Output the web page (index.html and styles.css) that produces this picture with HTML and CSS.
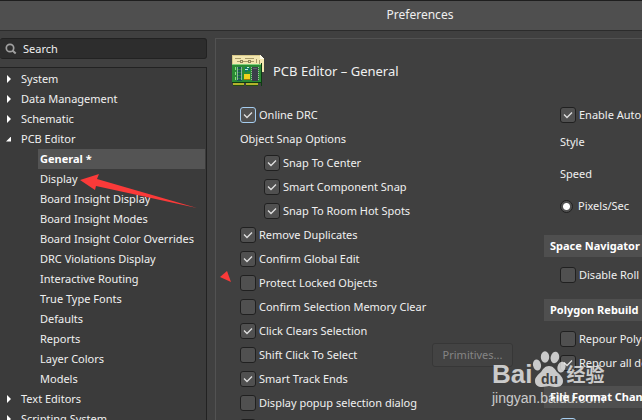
FILE: index.html
```html
<!DOCTYPE html>
<html lang="en">
<head>
<meta charset="utf-8">
<title>Preferences</title>
<link rel="stylesheet" href="styles.css">
</head>
<body>
<header class="titlebar">Preferences</header>
<div class="content">
  <aside class="sidebar">
    <label class="search">
      <svg class="search-icon" width="12" height="12" viewBox="0 0 12 12"><circle cx="5" cy="5" r="3.7" fill="none" stroke="#a0a0a0" stroke-width="1.7"/><path d="M7.5 7.5l3.2 3" stroke="#a0a0a0" stroke-width="2"/></svg>
      <input type="text" placeholder="Search" aria-label="Search">
    </label>
    <ul class="tree">
      <li class="node">System</li>
      <li class="node">Data Management</li>
      <li class="node">Schematic</li>
      <li class="node open">PCB Editor</li>
      <li class="leaf selected">General *</li>
      <li class="leaf">Display</li>
      <li class="leaf">Board Insight Display</li>
      <li class="leaf">Board Insight Modes</li>
      <li class="leaf">Board Insight Color Overrides</li>
      <li class="leaf">DRC Violations Display</li>
      <li class="leaf">Interactive Routing</li>
      <li class="leaf">True Type Fonts</li>
      <li class="leaf">Defaults</li>
      <li class="leaf">Reports</li>
      <li class="leaf">Layer Colors</li>
      <li class="leaf">Models</li>
      <li class="node">Text Editors</li>
      <li class="node">Scripting System</li>
    </ul>
  </aside>
  <main class="panel">
    <div class="panel-head">
      <svg width="32" height="32" viewBox="0 0 32 32" shape-rendering="crispEdges">
        <path d="M0 0h28l4 4v13H0z" fill="#f3e7b0"/>
        <path d="M0 0h28v1H0zM0 0h1v10H0z" fill="#d9c98a"/>
        <path d="M28 0v4h4z" fill="#fffbe6"/>
        <path d="M5 6h3M10 6h6M18 6h4M24 4v4M27 5v4M3 3h6M13 3h9" stroke="#a89a68" fill="none"/>
        <path d="M8 5h2v2H8zM16 5h2v2h-2z" fill="none" stroke="#8f8358"/>
        <path d="M0 9h30v19H0z" fill="#2b8a35"/>
        <path d="M0 9h30v1H0z" fill="#7fd07a"/>
        <path d="M29 8h1v23h-1zM0 27h29v1H0z" fill="#0d3c12"/>
        <path d="M1 28h11v2H1zM14 28h12v2H14z" fill="#b5b32c"/>
        <path d="M1 30h11v1H1zM14 30h12v1H14z" fill="#234d12"/>
        <path d="M3 12h1v3H3zM3 17h1v3H3zM3 22h1v3H3z" fill="#8ae37e"/>
        <path d="M5 12h5v2H5zM5 15h5v2H5zM5 18h5v2H5zM5 21h5v2H5zM5 24h5v2H5z" fill="#1b5b51"/>
        <path d="M5 12h1v13H5zM9 12h1v13H9z" fill="#b9cfca" opacity=".7"/>
        <path d="M13 12h2v2h-2zM16 13h2v3h-2zM13 15h2v2h-2z" fill="#0f766c"/>
        <path d="M15 12h2v1h-2zM13 14h3v1h-3z" fill="#bfe8e0"/>
        <path d="M12 19h6v5h-6z" fill="#f0d21c"/><path d="M12 24h6v1h-6z" fill="#9b7610"/>
        <path d="M20 12h6v14h-6z" fill="#3c3f4a"/><path d="M21 13h4v1h-4z" fill="#60646f"/>
        <path d="M19.500 12v14M26.500 12v14" stroke="#9fb8a0" stroke-dasharray="1 1"/>
      </svg>
      <h1>PCB Editor – General</h1>
    </div>
    <div class="columns">
      <div class="column">
        <label class="option"><input type="checkbox" class="focused" checked>Online DRC</label>
        <div class="option">Object Snap Options</div>
        <label class="option indent"><input type="checkbox" checked>Snap To Center</label>
        <label class="option indent"><input type="checkbox" checked>Smart Component Snap</label>
        <label class="option indent"><input type="checkbox" checked>Snap To Room Hot Spots</label>
        <label class="option"><input type="checkbox" checked>Remove Duplicates</label>
        <label class="option"><input type="checkbox" checked>Confirm Global Edit</label>
        <label class="option"><input type="checkbox">Protect Locked Objects</label>
        <label class="option"><input type="checkbox">Confirm Selection Memory Clear</label>
        <label class="option"><input type="checkbox" checked>Click Clears Selection</label>
        <div class="option split">
          <label class="option"><input type="checkbox">Shift Click To Select</label>
          <button type="button" class="primitives" disabled>Primitives...</button>
        </div>
        <label class="option"><input type="checkbox" checked>Smart Track Ends</label>
        <label class="option"><input type="checkbox">Display popup selection dialog</label>
        <label class="option"><input type="checkbox" aria-label="More"></label>
      </div>
      <div class="column side">
        <section class="group">
          <label class="option"><input type="checkbox" checked>Enable Auto Pan</label>
          <div class="field">Style</div>
          <div class="field">Speed</div>
          <label class="field"><input type="radio" name="speed" checked>Pixels/Sec</label>
        </section>
        <h2>Space Navigator Options</h2>
        <section class="group boxed">
          <label class="option"><input type="checkbox">Disable Roll</label>
        </section>
        <h2>Polygon Rebuild</h2>
        <section class="group boxed">
          <label class="option"><input type="checkbox">Repour Polygons After Modification</label>
          <label class="option"><input type="checkbox" checked>Repour all dependent polygons</label>
        </section>
        <h2>File Format Change Report</h2>
        <section class="group boxed">
          <label class="option"><input type="checkbox" class="focused" aria-label="Disable report"></label>
        </section>
      </div>
    </div>
  </main>
</div>

<svg class="arrow" width="118" height="36" viewBox="0 0 118 36"><path d="M0 7L19 1L17 6L117 35L16 13L15 17z" fill="#fb3a39"/></svg>
<svg class="pointer" width="12" height="12" viewBox="0 0 12 12"><path d="M7 0L0 6L11 11z" fill="#fb3a39"/></svg>

<div class="watermark">
  <div class="brand">
    <span class="bai">Bai</span>
    <span class="paw">
      <svg width="34" height="37" viewBox="0 0 34 37" fill="#fff">
        <ellipse cx="5" cy="14" rx="4" ry="5.500" transform="rotate(-12 5 14)"/>
        <ellipse cx="13" cy="6" rx="4.200" ry="5.800"/>
        <ellipse cx="23" cy="6.500" rx="4.200" ry="5.800" transform="rotate(12 23 6)"/>
        <ellipse cx="29.500" cy="16" rx="4" ry="5.500" transform="rotate(14 29 16)"/>
        <path d="M17 15c4 0 6 3 8 6 3 3 6 5 6 9 0 5-4 6-8 6-3 0-4-1-6-1s-4 1-7 1c-4 0-7-2-7-6s3-6 6-9c2-3 4-6 8-6z"/>
      </svg>
      <b class="du">du</b>
    </span>
    <span class="jingyan">经验</span>
  </div>
  <div class="site">jingyan.baidu.com</div>
</div>
</body>
</html>
```
FILE: styles.css
```css
* { box-sizing: border-box; }
body {
  margin: 0;
  height: 100vh;
  display: flex;
  flex-direction: column;
  overflow: hidden;
  background: #404040;
  color: #f0f0f0;
  font: 11px/16px "Noto Sans", "Noto Sans CJK SC", sans-serif;
  white-space: nowrap;
}
.titlebar {
  flex: none;
  height: 31px;
  border-top: 1px solid #1e1e1e;
  border-bottom: 1px solid #2c2c2c;
  background: #4f4f4f;
  font-size: 12px;
  line-height: 28px;
  text-align: center;
  padding-left: 198px;
}
.content { flex: 1; display: flex; gap: 8px; padding-top: 7px; min-height: 0; }

/* sidebar */
.sidebar { flex: none; width: 207px; display: flex; flex-direction: column; gap: 8px; }
.search {
  display: flex;
  align-items: center;
  height: 21px;
  padding-left: 5px;
  gap: 6px;
  background: #2d2d2d;
  border: 1px solid #222;
  border-left: 0;
  border-radius: 3px;
}
.search input {
  flex: 1;
  min-width: 0;
  border: 0;
  padding: 0;
  background: none;
  color: #f0f0f0;
  font: inherit;
  outline: none;
}
.search input::placeholder { color: #f0f0f0; }
.tree {
  flex: 1;
  min-height: 0;
  margin: 0;
  padding: 1px 1px 0 0;
  list-style: none;
  overflow: hidden;
  background: #3b3b3b;
  border: 1px solid #222;
  border-width: 1px 1px 0 0;
}
.tree li { height: 20px; line-height: 20px; }
.node { display: flex; align-items: center; padding-left: 7px; }
.node::before {
  content: "";
  width: 4px;
  height: 8px;
  margin-right: 10px;
  background: #fff;
  clip-path: polygon(0 0, 100% 50%, 0 100%);
}
.node.open::before {
  width: 5px;
  height: 5px;
  margin-left: -1px;
  clip-path: polygon(100% 0, 100% 100%, 0 100%);
}
.leaf { margin-left: 38px; padding-left: 2px; }
.leaf.selected { background: #545454; color: #fff; font-weight: bold; }

/* settings panel */
.panel {
  flex: 1;
  min-width: 0;
  padding: 16px 0 0 16px;
  overflow: hidden;
  border: 1px solid #525252;
  border-width: 1px 0 0 1px;
}
.panel-head { display: flex; align-items: center; gap: 9px; height: 32px; }
h1 { margin: 0; font-size: 13px; line-height: 20px; font-weight: normal; }
.columns { display: grid; grid-template-columns: 304px 1fr; padding: 16px 0 0 8px; }
.option { display: flex; align-items: center; height: 24px; gap: 3px; }
.indent { padding-left: 24px; }
.split { justify-content: space-between; padding-right: 31px; }
input[type=checkbox], input[type=radio] {
  appearance: none;
  flex: none;
  width: 16px;
  height: 16px;
  margin: 0;
  background: #505050 center no-repeat;
  border: 1px solid #202020;
  border-radius: 3px;
}
input[type=checkbox]:checked {
  background-image: url('data:image/svg+xml,<svg xmlns="http://www.w3.org/2000/svg" width="10" height="8"><path d="M1 3.500l3 3L9 1.500" fill="none" stroke="%23e0e0e0" stroke-width="1.300"/></svg>');
}
input[type=checkbox].focused { border-color: #a5cdf0; }
input[type=radio] {
  width: 13px;
  height: 13px;
  border-radius: 50%;
  background: radial-gradient(circle, #fff 3px, #505050 4px);
}
.primitives {
  width: 81px;
  height: 24px;
  padding: 0;
  background: #434343;
  border: 1px solid #373737;
  border-radius: 3px;
  color: #858585;
  font: inherit;
}
.group { padding-left: 16px; }
.group:first-child { padding-bottom: 13px; }
.field { display: flex; align-items: center; height: 32px; gap: 5px; }
.option + .field { margin-top: -1px; }
.boxed { padding-top: 6px; padding-bottom: 12px; }
.boxed + h2:last-of-type { margin-top: -1px; }
h2 {
  margin: 0;
  padding-left: 6px;
  height: 22px;
  background: #4f4f4f;
  color: #fff;
  font-size: 11px;
  line-height: 22px;
}

/* annotations over the dialog */
.arrow { position: absolute; left: 80px; top: 173px; }
.pointer { position: absolute; left: 220px; top: 271px; }
.watermark {
  position: absolute;
  left: 492px;
  top: 351px;
  color: #fff;
  opacity: .72;
  font-family: "Liberation Sans", "Noto Sans CJK SC", sans-serif;
}
.brand { display: flex; align-items: flex-end; height: 37px; }
.bai { font-size: 26px; line-height: 28px; font-weight: bold; }
.paw { display: grid; justify-items: center; align-items: end; }
.paw > * { grid-area: 1 / 1; }
.du { color: #404040; font-size: 14px; line-height: 18px; }
.jingyan { font-size: 19px; line-height: 24px; font-weight: bold; }
.site { font-size: 14px; line-height: 20px; }
```
